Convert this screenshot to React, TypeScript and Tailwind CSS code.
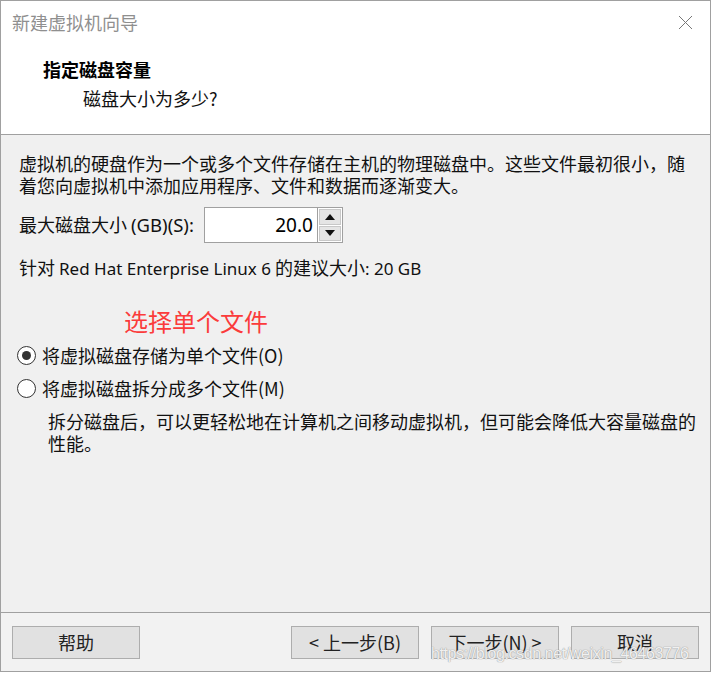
import React from 'react';

const cjk = '"Noto Sans CJK SC", "Noto Sans", sans-serif';
const latin = '"Noto Sans", "Noto Sans CJK SC", sans-serif';

function Radio({ checked, label }: { checked?: boolean; label: string }) {
  return (
    <div className="flex items-center h-[24px] -ml-[2px]">
      <span className="w-[19px] h-[19px] rounded-full border-[1.5px] border-[#333] bg-white flex items-center justify-center">
        {checked && <span className="w-[9px] h-[9px] rounded-full bg-[#333]" />}
      </span>
      <span className="ml-[6px] text-[18px] text-[#111]">{label}</span>
    </div>
  );
}

function WizButton({ children, className = '' }: { children: React.ReactNode; className?: string }) {
  return (
    <button
      className={`h-[33px] w-[128px] bg-[#e1e1e1] border border-[#adadad] text-[18px] text-[#222] flex items-center justify-center ${className}`}
    >
      {children}
    </button>
  );
}

export default function App() {
  return (
    <div
      className="w-[711px] h-[672px] border border-[#a0a0a0] bg-[#f0f0f0] flex flex-col relative overflow-hidden"
      style={{ fontFamily: cjk }}
    >
      {/* header */}
      <div className="bg-white h-[134px] border-b border-[#a0a0a0] shrink-0">
        <div className="h-[43px] flex items-center justify-between pl-[11px] pr-[17px]">
          <span className="text-[18px] text-[#8f8f8f]">新建虚拟机向导</span>
          <svg width="15" height="15" viewBox="0 0 15 15" className="text-[#777]">
            <path d="M1 1 L14 14 M14 1 L1 14" stroke="currentColor" strokeWidth="1" fill="none" />
          </svg>
        </div>
        <div className="pl-[42px] mt-[12px] text-[18px] font-bold leading-[26px] text-black">指定磁盘容量</div>
        <div className="pl-[82px] mt-[3px] text-[18px] leading-[26px] text-[#111]">磁盘大小为多少?</div>
      </div>

      {/* body */}
      <div className="flex-1 px-[18px] text-[#111]">
        <p className="mt-[17px] text-[18px] leading-[22px] whitespace-nowrap">
          虚拟机的硬盘作为一个或多个文件存储在主机的物理磁盘中。这些文件最初很小，随
          <br />
          着您向虚拟机中添加应用程序、文件和数据而逐渐变大。
        </p>

        <div className="mt-[11px] flex items-center h-[36px] gap-[10px]">
          <span className="text-[18px] whitespace-nowrap">
            最大磁盘大小 <span className="text-[18.5px]" style={{ fontFamily: latin }}>(GB)(S):</span>
          </span>
          <div className="flex h-[36px] w-[139px]">
            <div
              className="w-[114px] h-full bg-white border border-[#a0a0a0] flex items-center justify-end pr-[4px] text-[19px] text-black"
              style={{ fontFamily: latin }}
            >
              20.0
            </div>
            <div className="w-[25px] h-full flex flex-col border border-l-0 border-[#a0a0a0] bg-white p-px gap-px">
              <div className="flex-1 bg-[#e5e5e5] border border-[#c8c8c8] flex items-center justify-center">
                <svg width="10" height="6" viewBox="0 0 10 6"><path d="M5 0 L10 6 L0 6 Z" fill="#111" /></svg>
              </div>
              <div className="flex-1 bg-[#e5e5e5] border border-[#c8c8c8] flex items-center justify-center">
                <svg width="10" height="6" viewBox="0 0 10 6"><path d="M0 0 L10 0 L5 6 Z" fill="#111" /></svg>
              </div>
            </div>
          </div>
        </div>

        <div className="mt-[13px] text-[18px] leading-[22px] whitespace-nowrap">
          针对 <span className="text-[17px]" style={{ fontFamily: latin }}>Red Hat Enterprise Linux 6</span> 的建议大小
          <span className="text-[17px]" style={{ fontFamily: latin }}>: 20 GB</span>
        </div>

        <div className="mt-[26px] pl-[105px] text-[24px] leading-[30px] text-[#fb3b3b]">选择单个文件</div>

        <div className="mt-[7px]">
          <Radio checked label="将虚拟磁盘存储为单个文件(O)" />
        </div>
        <div className="mt-[9px]">
          <Radio label="将虚拟磁盘拆分成多个文件(M)" />
        </div>

        <p className="mt-[10px] pl-[29px] text-[18px] leading-[22px] whitespace-nowrap">
          拆分磁盘后，可以更轻松地在计算机之间移动虚拟机，但可能会降低大容量磁盘的
          <br />
          性能。
        </p>
      </div>

      {/* footer */}
      <div className="h-[59px] border-t border-[#a0a0a0] bg-[#f2f2f2] shrink-0 flex items-start pt-[13px] pl-[11px]">
        <WizButton>帮助</WizButton>
        <WizButton className="ml-[151px]">&lt; 上一步(B)</WizButton>
        <WizButton className="ml-[12px]">下一步(N) &gt;</WizButton>
        <WizButton className="ml-[12px]">取消</WizButton>
      </div>

      {/* watermark */}
      <div
        className="absolute left-[430px] top-[643px] text-[16px] leading-[20px] text-white/85 [text-shadow:0_0_1px_#9a9a9a,0_0_1px_#9a9a9a] tracking-[-0.4px] whitespace-nowrap pointer-events-none"
        style={{ fontFamily: '"Liberation Sans", sans-serif' }}
      >
        https://blog.csdn.net/weixin_46463776
      </div>
    </div>
  );
}
